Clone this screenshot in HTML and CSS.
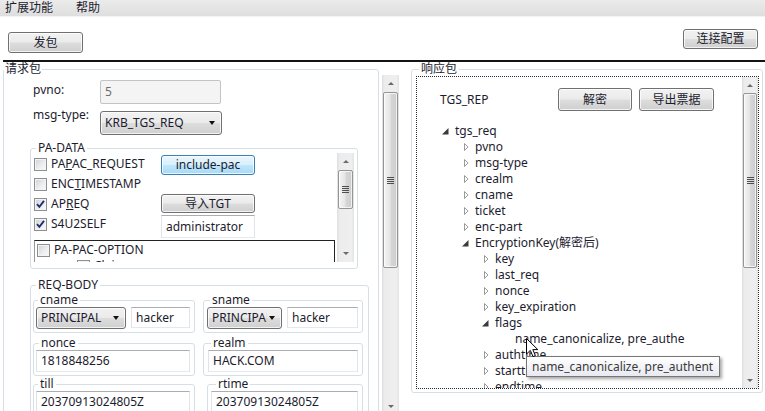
FILE: index.html
```html
<!DOCTYPE html>
<html lang="zh">
<head>
<meta charset="utf-8">
<title>Kerberos</title>
<link rel="stylesheet" href="styles.css">
</head>
<body>
<div class="menubar"><span>扩展功能</span><span>帮助</span></div>
<div class="toolbar">
  <button class="btn btn-send">发包</button>
  <button class="btn btn-conn">连接配置</button>
</div>
<div class="divider"></div>
<div class="main">
  <fieldset class="gb gb-req">
    <legend>请求包</legend>
    <div class="frow frow-pvno"><span class="lbl lbl-pvno">pvno:</span><div class="tb tb-disabled tb-pvno">5</div></div>
    <div class="frow frow-type"><span class="lbl lbl-type">msg-type:</span><div class="combo combo-type"><span class="ctext">KRB_TGS_REQ</span><i class="carrow"></i></div></div>
    <fieldset class="gb gb-pa">
      <legend>PA-DATA</legend>
      <div class="pa-body">
        <div class="pa-view">
          <div class="pa-top">
            <div class="pa-checks">
              <div class="chk-row"><span class="chk"></span><span>PA<u>P</u>AC_REQUEST</span></div>
              <div class="chk-row"><span class="chk"></span><span>ENC<u>T</u>IMESTAMP</span></div>
              <div class="chk-row"><span class="chk"><svg viewBox="0 0 11 11" width="11" height="11"><path d="M2 5.2 L4.4 7.8 L9 1.8" fill="none" stroke="#22306a" stroke-width="1.9"/></svg></span><span>AP<u>R</u>EQ</span></div>
              <div class="chk-row"><span class="chk"><svg viewBox="0 0 11 11" width="11" height="11"><path d="M2 5.2 L4.4 7.8 L9 1.8" fill="none" stroke="#22306a" stroke-width="1.9"/></svg></span><span>S4U2SELF</span></div>
            </div>
            <div class="pa-actions">
              <button class="btn btn-blue btn-pac">include-pac</button>
              <button class="btn btn-tgt">导入TGT</button>
              <div class="tb tb-admin">administrator</div>
            </div>
          </div>
          <div class="pac-box">
            <div class="chk-row"><span class="chk"></span><span>PA-PAC-OPTION</span></div>
            <div class="chk-row chk-sub"><span class="chk"></span><span>Claims</span></div>
          </div>
        </div>
        <div class="vs vs-pa">
          <div class="vs-btn"><i class="ar-up"></i></div>
          <div class="vs-thumb"><i class="grip"></i></div>
          <div class="vs-track"></div>
          <div class="vs-btn"><i class="ar-down"></i></div>
        </div>
      </div>
    </fieldset>
    <fieldset class="gb gb-body">
      <legend>REQ-BODY</legend>
      <div class="body-grid">
        <fieldset class="gb gb-cell c-cname"><legend>cname</legend>
          <div class="cell-in"><div class="combo combo-cn"><span class="ctext">PRINCIPAL</span><i class="carrow"></i></div><div class="tb tb-cn">hacker</div></div>
        </fieldset>
        <fieldset class="gb gb-cell c-sname"><legend>sname</legend>
          <div class="cell-in"><div class="combo combo-sn"><span class="ctext">PRINCIPAL</span><i class="carrow"></i></div><div class="tb tb-sn">hacker</div></div>
        </fieldset>
        <fieldset class="gb gb-cell c-nonce"><legend>nonce</legend>
          <div class="cell-in"><div class="tb tb-full">1818848256</div></div>
        </fieldset>
        <fieldset class="gb gb-cell c-realm"><legend>realm</legend>
          <div class="cell-in"><div class="tb tb-full">HACK.COM</div></div>
        </fieldset>
        <fieldset class="gb gb-cell c-till"><legend>till</legend>
          <div class="cell-in"><div class="tb tb-full">20370913024805Z</div></div>
        </fieldset>
        <fieldset class="gb gb-cell c-rtime"><legend>rtime</legend>
          <div class="cell-in"><div class="tb tb-full">20370913024805Z</div></div>
        </fieldset>
      </div>
    </fieldset>
  </fieldset>

  <div class="vs vs-outer">
    <div class="vs-btn"><i class="ar-up"></i></div>
    <div class="vs-thumb"><i class="grip"></i></div>
    <div class="vs-track"></div>
    <div class="vs-btn"><i class="ar-down"></i></div>
  </div>

  <fieldset class="gb gb-resp">
    <legend>响应包</legend>
    <div class="resp-frame">
      <div class="tree">
        <div class="tree-head"><span class="tgs">TGS_REP</span><button class="btn btn-dec">解密</button><button class="btn btn-exp">导出票据</button></div>
        <div class="node l0"><svg class="exp" viewBox="0 0 13 16" width="13" height="16"><path d="M6.5 5 L6.5 11.5 L0 11.5 Z" fill="#3a3a3a"/></svg><span>tgs_req</span></div>
        <div class="node l1"><svg class="exp" viewBox="0 0 13 16" width="13" height="16"><path d="M2.5 4.5 L6 8 L2.5 11.5 Z" fill="#fff" stroke="#9a9a9a"/></svg><span>pvno</span></div>
        <div class="node l1"><svg class="exp" viewBox="0 0 13 16" width="13" height="16"><path d="M2.5 4.5 L6 8 L2.5 11.5 Z" fill="#fff" stroke="#9a9a9a"/></svg><span>msg-type</span></div>
        <div class="node l1"><svg class="exp" viewBox="0 0 13 16" width="13" height="16"><path d="M2.5 4.5 L6 8 L2.5 11.5 Z" fill="#fff" stroke="#9a9a9a"/></svg><span>crealm</span></div>
        <div class="node l1"><svg class="exp" viewBox="0 0 13 16" width="13" height="16"><path d="M2.5 4.5 L6 8 L2.5 11.5 Z" fill="#fff" stroke="#9a9a9a"/></svg><span>cname</span></div>
        <div class="node l1"><svg class="exp" viewBox="0 0 13 16" width="13" height="16"><path d="M2.5 4.5 L6 8 L2.5 11.5 Z" fill="#fff" stroke="#9a9a9a"/></svg><span>ticket</span></div>
        <div class="node l1"><svg class="exp" viewBox="0 0 13 16" width="13" height="16"><path d="M2.5 4.5 L6 8 L2.5 11.5 Z" fill="#fff" stroke="#9a9a9a"/></svg><span>enc-part</span></div>
        <div class="node l1"><svg class="exp" viewBox="0 0 13 16" width="13" height="16"><path d="M6.5 5 L6.5 11.5 L0 11.5 Z" fill="#3a3a3a"/></svg><span>EncryptionKey(解密后)</span></div>
        <div class="node l2"><svg class="exp" viewBox="0 0 13 16" width="13" height="16"><path d="M2.5 4.5 L6 8 L2.5 11.5 Z" fill="#fff" stroke="#9a9a9a"/></svg><span>key</span></div>
        <div class="node l2"><svg class="exp" viewBox="0 0 13 16" width="13" height="16"><path d="M2.5 4.5 L6 8 L2.5 11.5 Z" fill="#fff" stroke="#9a9a9a"/></svg><span>last_req</span></div>
        <div class="node l2"><svg class="exp" viewBox="0 0 13 16" width="13" height="16"><path d="M2.5 4.5 L6 8 L2.5 11.5 Z" fill="#fff" stroke="#9a9a9a"/></svg><span>nonce</span></div>
        <div class="node l2"><svg class="exp" viewBox="0 0 13 16" width="13" height="16"><path d="M2.5 4.5 L6 8 L2.5 11.5 Z" fill="#fff" stroke="#9a9a9a"/></svg><span>key_expiration</span></div>
        <div class="node l2"><svg class="exp" viewBox="0 0 13 16" width="13" height="16"><path d="M6.5 5 L6.5 11.5 L0 11.5 Z" fill="#3a3a3a"/></svg><span>flags</span></div>
        <div class="node l3"><span class="exp-blank"></span><span>name_canonicalize, pre_authe</span></div>
        <div class="node l2"><svg class="exp" viewBox="0 0 13 16" width="13" height="16"><path d="M2.5 4.5 L6 8 L2.5 11.5 Z" fill="#fff" stroke="#9a9a9a"/></svg><span>authtime</span></div>
        <div class="node l2"><svg class="exp" viewBox="0 0 13 16" width="13" height="16"><path d="M2.5 4.5 L6 8 L2.5 11.5 Z" fill="#fff" stroke="#9a9a9a"/></svg><span>starttime</span></div>
        <div class="node l2"><svg class="exp" viewBox="0 0 13 16" width="13" height="16"><path d="M2.5 4.5 L6 8 L2.5 11.5 Z" fill="#fff" stroke="#9a9a9a"/></svg><span>endtime</span></div>
      </div>
      <div class="vs vs-tree">
        <div class="vs-btn"><i class="ar-up"></i></div>
        <div class="vs-thumb"><i class="grip"></i></div>
        <div class="vs-track"></div>
        <div class="vs-btn"><i class="ar-down"></i></div>
      </div>
    </div>
  </fieldset>
</div>

<div class="tooltip">name_canonicalize, pre_authent</div>
<svg class="cursor" viewBox="0 0 13 20" width="13" height="20"><path d="M0.5 0.5 L0.5 16 L4.3 12.4 L7 18.6 L9.4 17.6 L6.8 11.6 L11.8 11.6 Z" fill="#fff" stroke="#000" stroke-width="1" stroke-linejoin="miter"/></svg>
</body>
</html>
```

FILE: styles.css
```css
* { box-sizing: border-box; }
html, body { margin: 0; padding: 0; }
body {
  width: 765px;
  height: 411px;
  overflow: hidden;
  position: relative;
  background: #fff;
  font-family: "Noto Sans", "Noto Sans CJK SC", sans-serif;
  font-size: 12px;
  line-height: 16px;
  color: #1c1c2e;
}
u { text-decoration: underline; text-underline-offset: 1px; }

/* menu + toolbar */
.menubar {
  height: 17px;
  display: flex;
  align-items: center;
  gap: 23px;
  padding-left: 5px;
  background: linear-gradient(#ebebeb, #dedede);
  border-bottom: 1px solid #f3f3f3;
}
.toolbar { height: 43px; display: flex; align-items: flex-start; }
.divider { height: 2px; margin-left: 3px; background: #141414; }

.btn {
  font: inherit;
  color: inherit;
  padding: 0;
  display: flex;
  align-items: center;
  justify-content: center;
  border: 1px solid #707070;
  border-radius: 3px;
  background: linear-gradient(#f2f2f2 0%, #ebebeb 48%, #dddddd 52%, #cfcfcf 100%);
  box-shadow: inset 0 0 0 1px rgba(255,255,255,0.75);
  line-height: 16px;
}
.btn-send { width: 75px; height: 21px; margin: 15px 0 0 8px; }
.btn-conn { width: 75px; height: 20px; margin: 12px 7px 0 auto; }
.btn-blue {
  border-color: #3c7fb1;
  background: linear-gradient(#eaf6fd 0%, #d9f0fc 48%, #bee6fd 52%, #a7d9f5 100%);
}

/* main split */
.main { display: flex; align-items: flex-start; height: 349px; }

.gb {
  margin: 0;
  padding: 0;
  border: 1px solid #d5dfe5;
  border-radius: 3px;
  min-width: 0;
}
.gb > legend { padding: 0 2px; line-height: 14px; }

.gb-req { width: 376px; height: 400px; margin-left: 3px; flex: none; }
.gb-req > legend { margin-left: 0; padding: 0 1px; }

.frow { display: flex; align-items: flex-start; padding-left: 29px; }
.lbl { width: 67px; flex: none; }
.frow-pvno { margin-top: 4px; }
.lbl-pvno { margin-top: 2px; }
.frow-type { margin-top: 7px; }
.lbl-type { margin-top: -4px; }

.tb {
  display: flex;
  align-items: center;
  padding-left: 4px;
  background: #fff;
  border: 1px solid;
  border-color: #abadb3 #e2e3ea #e3e9ef #e2e3ea;
  white-space: nowrap;
  overflow: hidden;
}
.tb-disabled { background: #f4f4f4; border-color: #c2c5c8; color: #6d6d6d; border-radius: 2px; }
.tb-pvno { width: 121px; height: 24px; }

.combo {
  display: flex;
  align-items: center;
  padding-left: 4px;
  border: 1px solid #707070;
  border-radius: 3px;
  background: linear-gradient(#f2f2f2 0%, #ebebeb 48%, #dddddd 52%, #cfcfcf 100%);
  box-shadow: inset 0 0 0 1px rgba(255,255,255,0.75);
}
.ctext { flex: 1; min-width: 0; overflow: hidden; white-space: nowrap; }
.carrow {
  flex: none;
  width: 0; height: 0;
  border-left: 3.5px solid transparent;
  border-right: 3.5px solid transparent;
  border-top: 4px solid #111;
  margin: 0 6px 0 2px;
}
.combo-type { width: 122px; height: 24px; }

/* PA-DATA */
.gb-pa { width: 328px; margin: 6px 0 0 26px; padding: 0 3px 6px 3px; }
.gb-pa > legend { margin-left: 2px; }
.pa-body { display: flex; gap: 2px; height: 109px; margin-top: -2px; }
.pa-view { width: 301px; flex: none; overflow: hidden; padding-top: 1px; }
.pa-top { display: flex; align-items: flex-start; }
.pa-checks { width: 127px; flex: none; }
.chk-row { height: 20px; display: flex; align-items: center; white-space: nowrap; }
.chk {
  width: 13px; height: 13px; flex: none;
  margin-right: 4px;
  border: 1px solid #8e8f8f;
  background: linear-gradient(135deg, #cdd0d5 0%, #eeeff1 60%, #f8f8f8 100%);
  box-shadow: inset 0 0 0 1px #f4f4f4;
  display: flex; align-items: center; justify-content: center;
}
.pa-actions { width: 94px; flex: none; display: flex; flex-direction: column; padding-top: 1px; }
.btn-pac { height: 20px; }
.btn-tgt { height: 19px; margin-top: 19px; }
.tb-admin { height: 23px; margin-top: 2px; }

.pac-box {
  margin-top: 2px;
  height: 60px;
  border: 1px solid #222;
  border-left-color: #9a9a9a;
  padding: 1px 0 0 2px;
}
.pac-box .chk-row { height: 16px; }
.pac-box .chk-sub { padding-left: 40px; }

/* REQ-BODY */
.gb-body { width: 339px; margin: 9px 0 0 26px; padding: 2px 5px 6px 2px; }
.gb-body > legend { margin-left: 3px; }
.body-grid { display: grid; grid-template-columns: 162px 160px; column-gap: 8px; align-items: start; }
.gb-cell { padding: 0 4px 3px 2px; }
.gb-cell > legend { line-height: 12px; margin-left: 3px; }
.cell-in { display: flex; gap: 5px; margin-top: 1px; }
.combo-cn { width: 90px; height: 22px; flex: none; }
.tb-cn { width: 59px; height: 21px; flex: none; }
.c-cname > legend { margin-left: 2px; }
.c-sname { padding-left: 3px; }
.combo-sn { width: 75px; height: 22px; flex: none; }
.tb-sn { width: 71px; height: 21px; flex: none; }
.tb-full { flex: 1; height: 22px; }
.c-nonce, .c-realm { margin-top: 4px; }
.c-realm { padding-left: 4px; }
.c-till, .c-rtime { margin-top: 2px; }
.c-till > legend { margin-left: 2px; }
.c-rtime { margin-left: 4px; padding-left: 3px; }
.c-rtime > legend { margin-left: 5px; }

/* scrollbars */
.vs {
  display: flex;
  flex-direction: column;
  flex: none;
  background: linear-gradient(90deg, #dedede 0%, #ececec 15%, #efefef 85%, #e2e2e2 100%);
}
.vs-btn { height: 17px; flex: none; display: flex; align-items: center; justify-content: center; }
.ar-up, .ar-down { width: 0; height: 0; border-left: 3px solid transparent; border-right: 3px solid transparent; }
.ar-up { border-bottom: 3px solid #6a6a6a; }
.ar-down { border-top: 3px solid #6a6a6a; }
.vs-thumb {
  flex: none;
  margin: 0 1px;
  border: 1px solid #959595;
  border-radius: 2px;
  background: linear-gradient(90deg, #f4f4f4 0%, #e6e6e6 45%, #d6d6d6 55%, #cdcdcd 100%);
  box-shadow: inset 0 0 0 1px rgba(255,255,255,0.7);
  display: flex; align-items: center; justify-content: center;
}
.vs-track { flex: 1; }
.grip { width: 7px; height: 7px; background: repeating-linear-gradient(#4d4d4d 0 1px, transparent 1px 2px); }

.vs-outer { width: 17px; height: 340px; margin: 13px 0 0 3px; }
.vs-outer .vs-thumb { height: 176px; }
.vs-pa { width: 17px; }
.vs-pa .vs-thumb { height: 39px; }
.vs-tree { width: 16px; }
.vs-tree .vs-btn { height: 16px; }
.vs-tree .vs-thumb { height: 175px; }

/* response */
.gb-resp { width: 352px; flex: none; margin-left: 12px; padding: 0 3px 3px 4px; }
.gb-resp > legend { margin-left: 3px; }
.resp-frame { display: flex; height: 313px; border: 1px dotted #2a2a2a; }
.tree { flex: 1; min-width: 0; overflow: hidden; }
.tree-head { height: 46px; display: flex; align-items: flex-start; padding: 11px 0 0 23px; }
.tgs { width: 118px; flex: none; line-height: 23px; }
.btn-dec { width: 74px; height: 23px; margin-right: 7px; flex: none; }
.btn-exp { width: 75px; height: 23px; flex: none; }
.node { height: 16px; display: flex; align-items: center; white-space: nowrap; }
.exp, .exp-blank { flex: none; width: 13px; height: 16px; }
.l0 { padding-left: 25px; }
.l1 { padding-left: 45px; }
.l2 { padding-left: 65px; }
.l3 { padding-left: 85px; }

/* overlays */
.tooltip {
  position: absolute;
  left: 526px;
  top: 356px;
  width: 194px;
  height: 21px;
  padding-left: 5px;
  line-height: 19px;
  border: 1px solid #767676;
  background: linear-gradient(#ffffff, #e8e9f1);
  box-shadow: 2px 2px 3px rgba(0,0,0,0.35);
  white-space: nowrap;
  color: #3a3a3a;
}
.cursor { position: absolute; left: 526px; top: 338px; }
```
